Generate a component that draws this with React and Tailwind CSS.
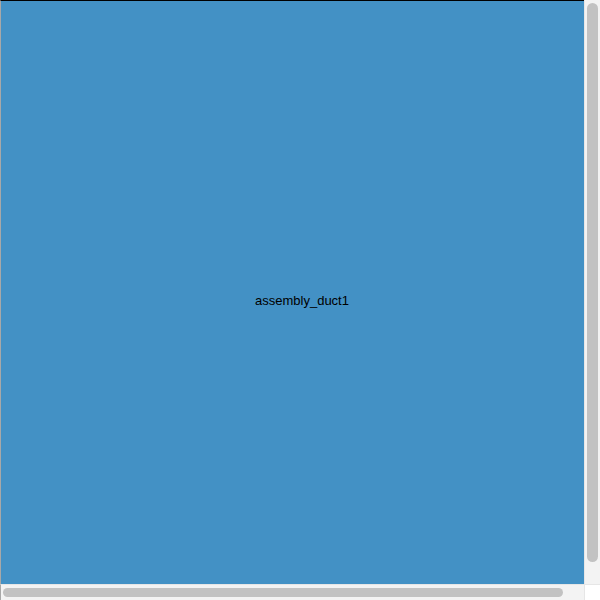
import React from 'react';

const App = () => {
    return (
        <div className="w-[600px] h-[600px] bg-white flex flex-col font-['Liberation_Sans',Arial,sans-serif]">
            <div className="flex flex-1 min-h-0">
                {/* Canvas */}
                <div className="flex-1 border-t border-t-black border-l border-l-[#a8a8a8] bg-[#4391c5] flex items-center justify-center">
                    <span className="text-[13px] text-black pl-[19px] pt-[17px]">assembly_duct1</span>
                </div>
                {/* Vertical scrollbar */}
                <div className="w-[16px] bg-[#f3f3f3] border-l border-[#e6e6e6] flex flex-col px-[2px] pt-[3px] pb-[22px]">
                    <div className="flex-1 rounded-full bg-[#c2c2c2]"></div>
                </div>
            </div>
            <div className="flex h-[16px]">
                {/* Horizontal scrollbar */}
                <div className="flex-1 bg-[#f3f3f3] border-t border-[#e6e6e6] border-l border-l-[#a8a8a8] flex items-center pl-[2px] pr-[21px]">
                    <div className="h-[9px] w-full rounded-full bg-[#c2c2c2]"></div>
                </div>
                <div className="w-[16px] bg-white border-t border-l border-[#e6e6e6]"></div>
            </div>
        </div>
    );
};

export default App;
